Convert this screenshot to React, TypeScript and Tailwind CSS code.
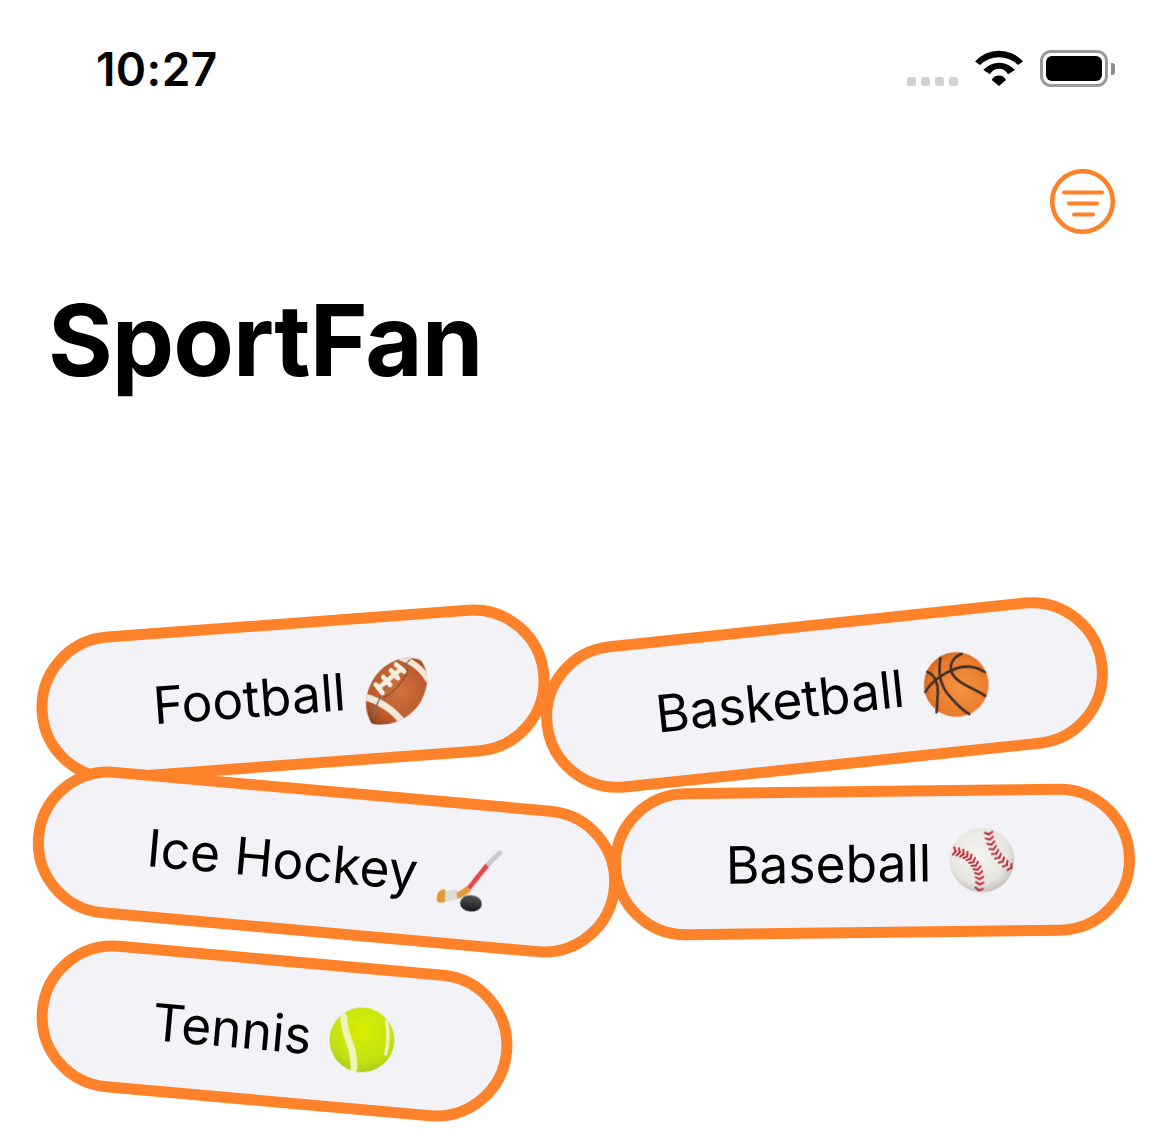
import React from "react";

const bez = (p: number[], t: number) => {
  const u = 1 - t;
  const x = u * u * u * p[0] + 3 * u * u * t * p[2] + 3 * u * t * t * p[4] + t * t * t * p[6];
  const y = u * u * u * p[1] + 3 * u * u * t * p[3] + 3 * u * t * t * p[5] + t * t * t * p[7];
  return [x, y];
};

function Stitches({ curve, count }: { curve: number[]; count: number }) {
  const items = [];
  for (let i = 0; i < count; i++) {
    const t = (i + 0.5) / count;
    const [x, y] = bez(curve, t);
    const [x2, y2] = bez(curve, Math.min(1, t + 0.01));
    const dx = x2 - x;
    const dy = y2 - y;
    const l = Math.hypot(dx, dy) || 1;
    const nx = -dy / l;
    const ny = dx / l;
    const tx = dx / l;
    const ty = dy / l;
    items.push(
      <g key={i} strokeLinecap="round">
        <line x1={x - nx * 11 - tx * 3} y1={y - ny * 11 - ty * 3} x2={x + tx * 3} y2={y + ty * 3} stroke="#c9303a" strokeWidth={6} />
        <line x1={x + nx * 11 - tx * 3} y1={y + ny * 11 - ty * 3} x2={x + tx * 3} y2={y + ty * 3} stroke="#b3323a" strokeWidth={6} />
      </g>
    );
  }
  return <g>{items}</g>;
}

const emojiCls = "w-[72px] h-[75px] shrink-0 blur-[0.4px]";

function Football() {
  const d = "M222 60C242 92 242 132 212 180C176 230 112 248 64 234C44 196 46 145 84 96C120 52 182 36 222 60Z";
  return (
    <svg viewBox="40 30 210 220" className={`${emojiCls} mt-[6px]`}>
      <defs>
        <radialGradient id="fb" cx="55%" cy="50%" r="65%">
          <stop offset="0%" stopColor="#d0723e" />
          <stop offset="70%" stopColor="#bb5a2c" />
          <stop offset="100%" stopColor="#96431f" />
        </radialGradient>
        <clipPath id="fbc">
          <path d={d} />
        </clipPath>
      </defs>
      <path d={d} fill="url(#fb)" />
      <g clipPath="url(#fbc)" fill="none">
        <path d="M160 46C192 58 224 85 242 124" stroke="#efe8d8" strokeWidth="18" />
        <path d="M44 152C85 165 130 195 158 242" stroke="#efe8d8" strokeWidth="20" />
        <path d="M190 55C150 85 95 130 70 215" stroke="#76706e" strokeWidth="4" />
        <path d="M103 160C128 152 160 125 182 86C172 72 150 85 120 112" stroke="#8c4526" strokeWidth="3" />
      </g>
      <path d="M92 130L162 80" stroke="#f4eee1" strokeWidth="14" strokeLinecap="round" />
      {[
        [84, 120, 102, 146],
        [108, 100, 126, 124],
        [132, 82, 150, 106],
        [148, 66, 170, 88],
      ].map((p, i) => (
        <line key={i} x1={p[0]} y1={p[1]} x2={p[2]} y2={p[3]} stroke="#f4eee1" strokeWidth="14" strokeLinecap="round" />
      ))}
    </svg>
  );
}

function Basketball() {
  return (
    <svg viewBox="40 30 210 220" className={`${emojiCls} mt-[14px] ml-[2px]`}>
      <defs>
        <radialGradient id="bb" cx="55%" cy="55%" r="60%">
          <stop offset="0%" stopColor="#f2933f" />
          <stop offset="75%" stopColor="#ea7b2c" />
          <stop offset="100%" stopColor="#cf621f" />
        </radialGradient>
      </defs>
      <circle cx="141" cy="128" r="95" fill="url(#bb)" />
      <g fill="none" stroke="#3f2f2b" strokeWidth="7.500" strokeLinecap="round">
        <path d="M48 140C75 105 125 82 165 78C190 78 210 85 228 100" />
        <path d="M103 45C92 85 92 125 118 160C135 185 150 205 170 218" />
        <path d="M60 82C85 95 90 130 82 160C80 175 78 190 75 203" />
        <path d="M166 40C135 48 122 75 135 100C150 130 195 145 222 170" />
      </g>
    </svg>
  );
}

function Hockey() {
  return (
    <svg viewBox="40 30 210 220" className={`${emojiCls} mt-[6px]`}>
      <defs>
        <linearGradient id="pk" x1="0" y1="0" x2="0" y2="1">
          <stop offset="0%" stopColor="#55565a" />
          <stop offset="100%" stopColor="#17171a" />
        </linearGradient>
      </defs>
      <path d="M228 58L192 100" stroke="#c9c9cb" strokeWidth="14" strokeLinecap="round" />
      <path d="M194 98L146 170" stroke="#e8464c" strokeWidth="14" />
      <path d="M146 170C135 185 125 190 108 196" stroke="#e59b3a" strokeWidth="19" fill="none" />
      <path d="M112 176L116 204L78 216L76 184Z" fill="#dcdcda" />
      <path d="M78 178L80 216C72 219 62 220 57 215C53 204 57 188 65 182Z" fill="#e2972f" />
      <ellipse cx="157" cy="213" rx="32" ry="24" fill="url(#pk)" />
    </svg>
  );
}

function Baseball() {
  return (
    <svg viewBox="40 30 210 220" className={`${emojiCls} mt-[6px]`}>
      <defs>
        <radialGradient id="ba" cx="45%" cy="40%" r="65%">
          <stop offset="0%" stopColor="#f5f4f1" />
          <stop offset="70%" stopColor="#e6e5e0" />
          <stop offset="100%" stopColor="#b9b8b4" />
        </radialGradient>
      </defs>
      <circle cx="142" cy="128" r="95" fill="url(#ba)" />
      <Stitches curve={[56, 100, 105, 105, 150, 150, 130, 222]} count={12} />
      <Stitches curve={[162, 42, 165, 90, 190, 130, 232, 155]} count={9} />
    </svg>
  );
}

function Tennis() {
  return (
    <svg viewBox="40 30 210 220" className={`${emojiCls} mt-[6px] -ml-[3px]`}>
      <defs>
        <radialGradient id="tn" cx="50%" cy="35%" r="70%">
          <stop offset="0%" stopColor="#d8ee00" />
          <stop offset="70%" stopColor="#c4e012" />
          <stop offset="100%" stopColor="#a2c81c" />
        </radialGradient>
        <clipPath id="tc">
          <circle cx="149" cy="133" r="95" />
        </clipPath>
      </defs>
      <circle cx="149" cy="133" r="95" fill="url(#tn)" />
      <g clipPath="url(#tc)" fill="none" stroke="#f1f5bb" strokeLinecap="round">
        <path d="M90 70C92 122 130 150 133 218" strokeWidth="20" />
        <path d="M216 72C224 100 228 130 222 168" strokeWidth="10" />
      </g>
    </svg>
  );
}

const chips = [
  { label: "Football", Icon: Football, cls: "left-[36px] top-[618px] w-[514px] -rotate-[4.25deg]" },
  { label: "Basketball", Icon: Basketball, cls: "left-[540px] top-[619px] w-[569px] -rotate-[6deg]" },
  { label: "Ice Hockey", Icon: Hockey, cls: "left-[32px] top-[786px] w-[589px] rotate-[5.1deg]" },
  { label: "Baseball", Icon: Baseball, cls: "left-[610px] top-[786px] w-[525px] -rotate-[0.7deg]" },
  { label: "Tennis", Icon: Tennis, cls: "left-[36px] top-[955px] w-[477px] rotate-[5.1deg]" },
];

export default function App() {
  return (
    <div className="relative w-[1170px] h-[1141px] overflow-hidden bg-white text-black [font-family:Inter,'Liberation_Sans',sans-serif]">
      <div className="flex items-start justify-between h-[169px]">
        <span className="ml-[96px] mt-[41px] text-[46px] leading-[56px] font-semibold tracking-[0.4px]">10:27</span>
        <div className="flex items-start mt-[50px] mr-[55px]">
          <div className="flex gap-[5px] mt-[27px] mr-[17px]">
            {[0, 1, 2, 3].map((i) => (
              <span key={i} className="w-[9px] h-[9px] rounded-[2.5px] bg-[#d2d2d2]" />
            ))}
          </div>
          <svg viewBox="0 0 48 36" className="w-[48px] h-[36px] mr-[17px]">
            <path d="M0 11.500A32 32 0 0 1 48 11.500L43 15A27.300 27.300 0 0 0 5 15Z" />
            <path d="M8.300 20A20.900 20.900 0 0 1 40 20L33 24.300A10 10 0 0 0 15 24.300Z" />
            <path d="M16.700 30A8 8 0 0 1 31 30L24 36Z" />
          </svg>
          <div className="flex items-center">
            <div className="w-[68px] h-[37px] rounded-[11px] border-[3px] border-[#9a9a9a] p-[3px]">
              <div className="w-full h-full rounded-[6px] bg-black" />
            </div>
            <div className="ml-[3px] w-[4px] h-[12px] rounded-r-[3px] bg-[#8e8e8e]" />
          </div>
        </div>
      </div>

      <div className="flex justify-end pr-[55px]">
        <svg viewBox="0 0 65 65" className="w-[65px] h-[65px]" fill="none" stroke="#fe8229" strokeLinecap="round">
          <circle cx="32.500" cy="32.500" r="30.300" strokeWidth="4.500" />
          <path d="M14 23.500H52M19 34.500H47M24 45.500H43" strokeWidth="4" />
        </svg>
      </div>

      <h1 className="ml-[48px] mt-[44px] text-[99px] leading-[124px] font-bold tracking-[-1px]">SportFan</h1>

      {chips.map(({ label, Icon, cls }) => (
        <div
          key={label}
          className={`absolute h-[152px] rounded-full border-[11px] border-[#fe8229] bg-[#f2f2f7] flex items-center justify-center gap-[16px] text-[51.500px] leading-none ${cls}`}
        >
          <span className="mt-[4px]">{label}</span>
          <Icon />
        </div>
      ))}
    </div>
  );
}
